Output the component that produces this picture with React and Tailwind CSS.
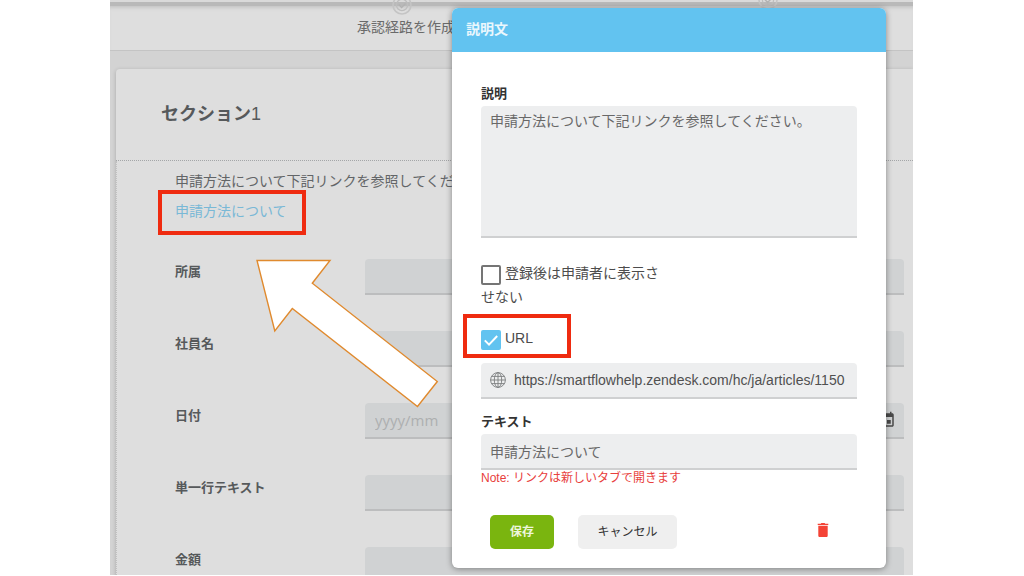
import React, { useState } from "react";
import { MdEvent } from "react-icons/md";

const rows = [
  { id: "dept", label: "所属" },
  { id: "name", label: "社員名" },
  { id: "date", label: "日付", placeholder: "yyyy/mm", calendar: true },
  { id: "line", label: "単一行テキスト" },
  { id: "price", label: "金額" },
];

function StepIcon() {
  return (
    <svg viewBox="0 0 20 20" className="size-5" fill="none" aria-hidden="true">
      <circle cx="10" cy="10" r="9" stroke="#c4c4c4" strokeWidth="1.6" />
      <circle cx="10" cy="10" r="5.6" stroke="#bdbdbd" strokeWidth="1.2" />
      <path d="M6.8 9.4l2.8 3 4-4" stroke="#b2b2b2" strokeWidth="1.4" />
    </svg>
  );
}

function GlobeIcon() {
  return (
    <svg
      viewBox="0 0 16 16"
      className="size-4 shrink-0"
      fill="none"
      stroke="#7b7d7e"
      strokeWidth="0.9"
      aria-hidden="true"
    >
      <circle cx="8" cy="8" r="7.4" />
      <ellipse cx="8" cy="8" rx="3.7" ry="7.4" />
      <path d="M8 .6v14.8M.6 8h14.8M1.6 4.4h12.8M1.6 11.6h12.8" />
    </svg>
  );
}

function TrashIcon() {
  return (
    <svg viewBox="0 0 18 18" className="size-[18px]" fill="currentColor" aria-hidden="true">
      <path d="M3.7 2.8h3L7.4 2h3.2l.7.8h3v1.3H3.7zM4.3 4.8h9.4v10a1.2 1.2 0 0 1-1.2 1.2h-7a1.2 1.2 0 0 1-1.2-1.2z" />
    </svg>
  );
}

function Checkbox({ checked, onChange }) {
  return (
    <span className="relative top-1 mr-1 inline-block size-5 align-top">
      <input
        type="checkbox"
        checked={checked}
        onChange={onChange}
        className="block size-5 appearance-none rounded-xs border-2 border-[#757575] bg-white checked:border-[#62c3f0] checked:bg-[#62c3f0]"
      />
      {checked && (
        <svg
          viewBox="0 0 20 20"
          className="pointer-events-none absolute inset-0 size-5"
          fill="none"
          stroke="#fff"
          strokeWidth="2"
          aria-hidden="true"
        >
          <path d="M3.8 10.4l4.2 4.2 8.2-8.6" />
        </svg>
      )}
    </span>
  );
}

function FormRow({ id, label, placeholder, calendar }) {
  return (
    <div className="flex items-start">
      <label
        htmlFor={id}
        className="w-[190px] shrink-0 pt-[3px] text-[13px] leading-5 font-bold text-[#56595b]"
      >
        {label}
      </label>
      <div className="flex h-9 flex-1 items-center rounded-t-sm border-b-2 border-[#bcbdbe] bg-[#d0d2d3] pr-2">
        <input
          id={id}
          type="text"
          placeholder={placeholder}
          className="h-full min-w-0 flex-1 bg-transparent pl-[10px] font-['Open_Sans',sans-serif] text-[15px] placeholder:text-[#adafb0]"
        />
        {calendar && <MdEvent className="size-[18px] text-[#4a4a4a]" />}
      </div>
    </div>
  );
}

function DescriptionDialog() {
  const [hidden, setHidden] = useState(false);
  const [useUrl, setUseUrl] = useState(true);

  return (
    <section
      role="dialog"
      aria-labelledby="dialog-title"
      className="w-[434px] overflow-hidden rounded-md bg-white shadow-[0_1px_6px_rgba(0,0,0,0.4)]"
    >
      <h2
        id="dialog-title"
        className="bg-[#62c3f0] px-[14px] pb-[2px] text-sm leading-[42px] font-bold text-[#eaf7fd]"
      >
        説明文
      </h2>
      <form className="flex flex-col px-[29px] pt-8 pb-[19px] text-sm text-[#4c4c4c]">
        <label htmlFor="desc" className="mb-[2px] text-[13px] leading-5 font-bold text-[#333]">
          説明
        </label>
        <textarea
          id="desc"
          defaultValue="申請方法について下記リンクを参照してください。"
          className="block h-[132px] resize-none rounded-t-sm border-b-2 border-[#cfd0d1] bg-[#edeeef] px-[9px] py-1 leading-[22px] text-[#686868]"
        />

        <label className="mt-[23px] block w-[180px] leading-6">
          <Checkbox checked={hidden} onChange={() => setHidden(!hidden)} />
          登録後は申請者に表示させない
        </label>

        <div className="relative mt-[17px]">
          <label className="block leading-6">
            <Checkbox checked={useUrl} onChange={() => setUseUrl(!useUrl)} />
            URL
          </label>
          <span className="pointer-events-none absolute -top-3 -left-[18px] h-[44px] w-[108px] border-4 border-[#ef2b10]" />
        </div>

        <div className="mt-[13px] flex h-9 items-center gap-2 rounded-t-sm border-b-2 border-[#cfd0d1] bg-[#edeeef] pl-[9px]">
          <GlobeIcon />
          <input
            type="text"
            aria-label="URL"
            defaultValue="https://smartflowhelp.zendesk.com/hc/ja/articles/1150"
            className="h-full min-w-0 flex-1 bg-transparent text-[#505050]"
          />
        </div>

        <label htmlFor="link-text" className="mt-[13px] mb-[2px] text-[13px] leading-5 font-bold text-[#333]">
          テキスト
        </label>
        <input
          id="link-text"
          type="text"
          defaultValue="申請方法について"
          className="h-9 rounded-t-sm border-b-2 border-[#cfd0d1] bg-[#edeeef] px-[9px] text-[#686868]"
        />
        <p className="text-xs text-[#e8403c]">Note: リンクは新しいタブで開きます</p>

        <div className="mt-[29px] flex items-center px-[9px] text-xs">
          <button type="button" className="h-[34px] w-16 rounded-[5px] bg-[#7ab50f] font-bold text-[#edf6dc]">
            保存
          </button>
          <button type="button" className="ml-6 h-[34px] w-[99px] rounded-[5px] bg-[#efefef] text-[#333]">
            キャンセル
          </button>
          <button type="button" aria-label="削除" className="mr-4 ml-auto pb-1 text-[#f44336]">
            <TrashIcon />
          </button>
        </div>
      </form>
    </section>
  );
}

export default function App() {
  return (
    <div className="h-screen bg-white pr-[111px] pb-px pl-[110px] font-['Liberation_Sans','Noto_Sans_CJK_JP',sans-serif]">
      <div className="relative h-full overflow-hidden bg-[#d3d3d3]">
        <header className="h-[6px] border-b-4 border-[#b9b9b9] bg-[#dadada]" />
        <nav className="flex h-[45px] items-start border-b border-[#c4c4c4] bg-[#dedede] pl-[247px] text-sm text-[#6a6a6a] shadow-[inset_0_4px_4px_-3px_#bdbdbd]">
          <div className="-mt-[11px] w-[366px]">
            <div className="pb-[2px] pl-[35px]">
              <StepIcon />
            </div>
            <span className="block leading-5">承認経路を作成</span>
          </div>
          <div className="-mt-4 pl-[35px]">
            <StepIcon />
          </div>
        </nav>

        <main className="pt-[18px] pl-[6px]">
          <div className="rounded-tl-sm bg-[#dedede] shadow-[0_1px_4px_rgba(0,0,0,0.2)]">
            <h1 className="border-b border-dotted border-[#a4a6a8] pl-[45px] text-lg leading-[91px] font-bold text-[#56595b]">
              セクション<span className="font-normal">1</span>
            </h1>
            <div className="border-l border-dotted border-[#c0c0c0] pt-[5px] pr-[9px] pl-[58px] text-sm leading-[30px]">
              <p className="whitespace-nowrap text-[#626567]">
                申請方法について下記リンクを参照してください。
              </p>
              <div className="relative">
                <a href="#" className="text-[#79b8d6]">
                  申請方法について
                </a>
                <span className="pointer-events-none absolute -top-[6px] -left-[17px] h-[45px] w-[148px] border-4 border-[#ef2b10]" />
              </div>
              <div className="mt-[33px] flex flex-col gap-9">
                {rows.map((row) => (
                  <FormRow key={row.id} {...row} />
                ))}
              </div>
            </div>
          </div>
        </main>

        <div className="absolute inset-0 flex items-start justify-end pt-2 pr-[27px]">
          <DescriptionDialog />
        </div>

        {/* callout arrow from the URL option to the link */}
        <svg
          viewBox="0 0 184 150"
          className="pointer-events-none absolute top-[258px] left-[145px] h-[150px] w-[184px]"
          fill="#fff"
          stroke="#e08a2e"
          strokeWidth="1.4"
          aria-hidden="true"
        >
          <path d="M2 2.5H75L57.3 25.2 182.3 123.5 162.5 148.5 37.3 50.5 19.8 73Z" />
        </svg>
      </div>
    </div>
  );
}
